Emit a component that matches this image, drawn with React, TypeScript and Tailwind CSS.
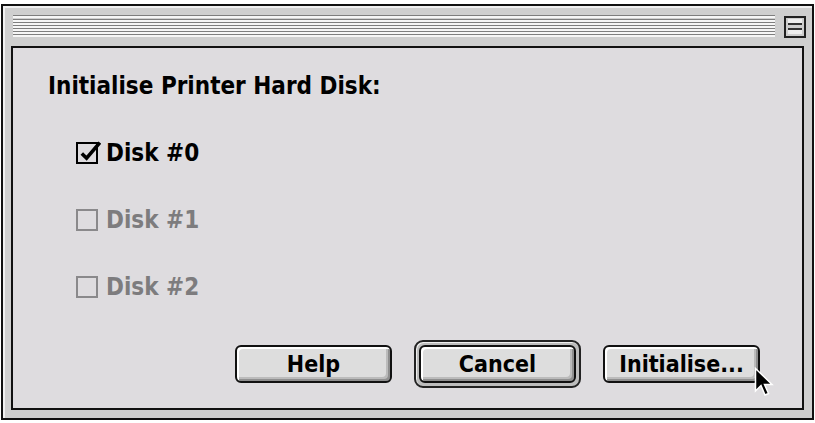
import React from "react";

const font = { fontFamily: '"DejaVu Sans Condensed", "DejaVu Sans", sans-serif' };

function Stripes() {
  return (
    <div className="flex-1 flex flex-col">
      {Array.from({ length: 7 }).map((_, i) => (
        <div key={i} className="h-[3px] border-t border-[#7e7e7e] bg-[#f6f6f6] mb-[0.2px]" />
      ))}
    </div>
  );
}

function Check({ checked, disabled }: { checked?: boolean; disabled?: boolean }) {
  return (
    <div
      className={
        "w-[22px] h-[22px] relative shrink-0 " +
        (disabled ? "border-2 border-[#8a898b]" : "border-2 border-black")
      }
    >
      {checked && (
        <svg viewBox="0 0 20 20" className="absolute left-[-1px] top-[-5px] w-[24px] h-[24px]">
          <path d="M4 12 L8 16 L19 3" fill="none" stroke="black" strokeWidth="3" />
        </svg>
      )}
    </div>
  );
}

function Button({ label, def }: { label: string; def?: boolean }) {
  const inner = (
    <div className="w-[157px] h-[38px] rounded-[6px] border-2 border-[#111] bg-[#dddddd] shadow-[inset_2px_2px_0_#ffffff,inset_-2px_-2px_0_#8f8f8f,inset_-4px_-4px_0_#bbbbbb] flex items-center justify-center text-[23px] font-bold text-black leading-none">
      {label}
    </div>
  );
  if (def)
    return (
      <div className="p-[3px] rounded-[9px] border-2 border-[#222] bg-[#bdbdbd] shadow-[inset_1px_1px_0_#eeeeee] -my-[5px]">
        {inner}
      </div>
    );
  return inner;
}

export default function App() {
  return (
    <div className="w-[815px] h-[423px] bg-white pt-[4px] pl-[1px]" style={font}>
      <div className="w-[813px] h-[416px] border-2 border-[#111] bg-[#cfcfcf] shadow-[inset_2px_2px_0_#f0f0f0] flex flex-col">
        <div className="h-[40px] flex items-center pl-[10px] pr-[6px] pt-[1px] gap-[9px]">
          <Stripes />
          <div className="w-[22px] h-[22px] border-2 border-[#222] bg-[#cfcfcf] flex flex-col justify-center gap-[3px] px-[2px]">
            <div className="h-[6px] border-b-2 border-[#333] bg-[#eeeeee]" />
            <div className="h-[6px] border-t-2 border-[#333] bg-[#eeeeee]" />
          </div>
        </div>
        <div className="ml-[8px] mr-[8px] h-[364px] border-2 border-[#111] bg-[#dedcdf] relative flex flex-col">
          <div className="pl-[35px] pt-[26px] text-[24px] font-bold text-black leading-none">
            Initialise Printer Hard Disk:
          </div>
          <div className="pl-[63px] pt-[44px] flex flex-col gap-[45px]">
            <div className="flex items-center gap-[8px] h-[22px] text-[24px] font-bold text-black">
              <Check checked />
              <span>Disk #0</span>
            </div>
            <div className="flex items-center gap-[8px] h-[22px] text-[24px] font-bold text-[#7d7c7e]">
              <Check disabled />
              <span>Disk #1</span>
            </div>
            <div className="flex items-center gap-[8px] h-[22px] text-[24px] font-bold text-[#7d7c7e]">
              <Check disabled />
              <span>Disk #2</span>
            </div>
          </div>
          <div className="flex justify-end items-center gap-[22px] pr-[42px] mt-[47px]">
            <Button label="Help" />
            <Button label="Cancel" def />
            <Button label="Initialise..." />
          </div>
          <svg className="absolute left-[741px] top-[319px]" width="22" height="32" viewBox="0 0 22 32">
            <path d="M1.5 1.5 L1.5 24 L7 18.5 L11 28 L14.5 26.5 L10.5 17.5 L18 17.5 Z" fill="black" stroke="white" strokeWidth="1.5" />
          </svg>
        </div>
      </div>
    </div>
  );
}
